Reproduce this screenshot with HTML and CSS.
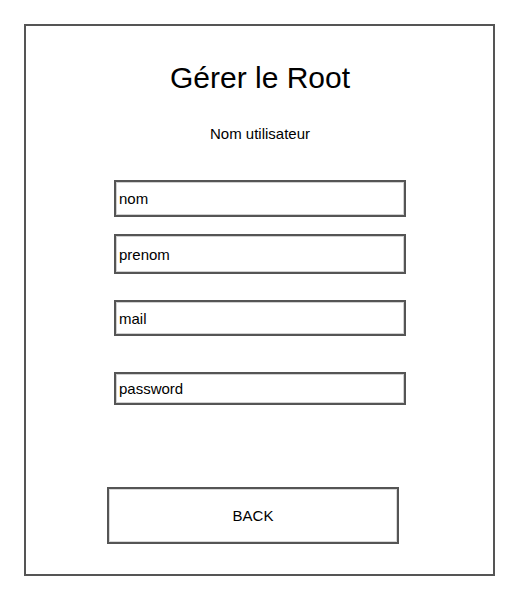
FILE: index.html
```html
<!DOCTYPE html>
<html lang="fr">
<head>
<meta charset="utf-8">
<title>Gérer le Root</title>
<link rel="stylesheet" href="styles.css">
</head>
<body>
<div class="frame">
  <h1 class="title">Gérer le Root</h1>
  <p class="subtitle">Nom utilisateur</p>
  <div class="field field-nom">nom</div>
  <div class="field field-prenom">prenom</div>
  <div class="field field-mail">mail</div>
  <div class="field field-password">password</div>
  <div class="back">BACK</div>
</div>
</body>
</html>
```

FILE: styles.css
```css
html, body {
  margin: 0;
  padding: 0;
  background: #ffffff;
}
body {
  padding: 24px;
  font-family: "Liberation Sans", Arial, sans-serif;
  color: #000;
}
* { box-sizing: border-box; }

.frame {
  width: 471px;
  height: 552px;
  border: 2px solid #555555;
  display: flex;
  flex-direction: column;
  align-items: flex-start;
}
.title {
  margin: 35px 0 0 0;
  width: 100%;
  text-align: center;
  font-weight: normal;
  font-size: 30px;
  line-height: 34px;
  padding-left: 1px;
}
.subtitle {
  margin: 30px 0 0 0;
  width: 100%;
  text-align: center;
  font-size: 15px;
  line-height: 18px;
  padding-left: 1px;
}
.field {
  margin-left: 88px;
  width: 292px;
  border: 2px solid #555555;
  box-shadow: inset 0 0 0 1px #d0d0d0;
  display: flex;
  align-items: center;
  padding-left: 3px;
  font-size: 15px;
}
.field-nom { margin-top: 37px; height: 37px; }
.field-prenom { margin-top: 17px; height: 40px; }
.field-mail { margin-top: 26px; height: 36px; }
.field-password { margin-top: 36px; height: 33px; }

.back {
  margin-left: 81px;
  margin-top: 82px;
  width: 292px;
  height: 57px;
  border: 2px solid #555555;
  box-shadow: inset 0 0 0 1px #d8d8d8;
  display: flex;
  align-items: center;
  justify-content: center;
  font-size: 15px;
}
```
